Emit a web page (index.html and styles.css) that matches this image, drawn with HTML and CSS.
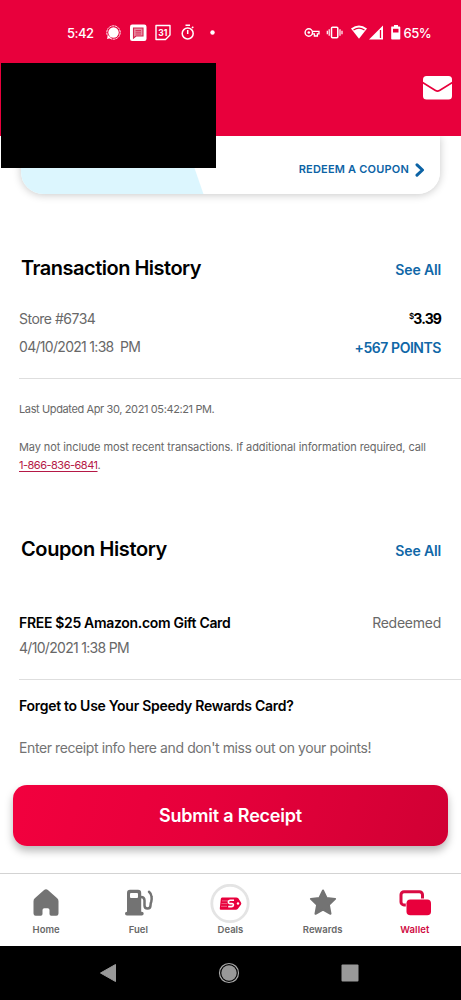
FILE: index.html
```
<!DOCTYPE html>
<html lang="en">
<head>
<meta charset="utf-8">
<title>Wallet</title>
<link rel="stylesheet" href="styles.css">
</head>
<body>
<div class="screen">
  <header class="header">
    <div class="status">
      <span class="clock">5:42</span>
      <svg class="notifications" width="110" height="20" viewBox="0 0 110 20" fill="#fff">
        <circle cx="8.500" cy="9.500" r="5.200"/>
        <circle cx="8.500" cy="9.500" r="6.700" fill="none" stroke="#fff" stroke-width="1" stroke-dasharray="2.4 .6"/>
        <path d="M2 16l1-4 3 3z"/>
        <rect x="25" y="1.500" width="16.500" height="16.500" rx="2.200"/>
        <path d="M28.500 5h9.500v8h-7l-2.500 2z" fill="#e98ba2" stroke="#d3224d" stroke-width="1.100"/>
        <path d="M30.500 7.500h5.500M30.500 9.200h5.500M30.500 11h5.500" stroke="#d3224d" stroke-width=".8"/>
        <path d="M56 2.500h14v9.500l-4.500 4.500H56z" transform="translate(-5 0)" fill="none" stroke="#fff" stroke-width="1.400" stroke-linejoin="round"/>
        <text class="calendar-day" x="57.800" y="12.800" text-anchor="middle">31</text>
        <circle cx="82.700" cy="10.500" r="5.500" fill="none" stroke="#fff" stroke-width="1.500"/>
        <path d="M80.500 2.300h4.500M82.700 7v4M87 5l1.300-1.300" stroke="#fff" stroke-width="1.500"/>
        <circle cx="107.500" cy="9.500" r="2.200"/>
      </svg>
      <svg class="signals" width="97" height="20" viewBox="0 0 97 20" fill="#fff">
        <circle cx="4.800" cy="9.500" r="3.700" fill="none" stroke="#fff" stroke-width="1.400"/>
        <circle cx="4.800" cy="9.500" r="1.300"/>
        <path d="M8.300 8.300H15v2.500h-1.600V13h-3v-2.200H8" fill="none" stroke="#fff" stroke-width="1.300"/>
        <rect x="27.500" y="4.200" width="6.300" height="10.600" rx="1" fill="none" stroke="#fff" stroke-width="1.500"/>
        <path d="M25.200 6.200v6.600M23.300 7.700v3.600M36 6.200v6.600M38 7.700v3.600" stroke="#fff" stroke-width="1.200"/>
        <path d="M47 5.500q8-6 16 0L55 15.800z"/>
        <path d="M49.500 7q5.500-3.700 11 0" fill="none" stroke="#e8003c" stroke-width="1.100"/>
        <path d="M79 2.500v14H65z"/>
        <path d="M76.500 7v8" stroke="#e8003c" stroke-width="1.300"/>
        <path d="M87.500 3.500H90V2h4v1.500h1.500q.8 0 .8.800v11.500q0 .8-.8.800H88q-.8 0-.8-.8V4.300q0-.8.300-.8z"/>
        <path d="M89 5.800h5.500v3.700H89z" fill="#e8003c"/>
      </svg>
      <span class="battery">65%</span>
    </div>
    <svg class="mail" width="29" height="24" viewBox="0 0 29 24">
      <rect width="29" height="23.500" rx="3.500" fill="#fff"/>
      <path d="M-.5 6.500L12.500 14.500q2 1.200 4 0L29.500 6.500" fill="none" stroke="#e8003c" stroke-width="1.700"/>
    </svg>
    <div class="cover"></div>
  </header>

  <main class="content">
    <div class="card-clip">
      <a class="coupon-card">
        <span class="coupon-label">REDEEM A COUPON</span>
        <svg width="10" height="14" viewBox="0 0 10 14"><path d="M2 1.800L7.500 7 2 12.200" fill="none" stroke="#0c63a5" stroke-width="3" stroke-linecap="round" stroke-linejoin="round"/></svg>
      </a>
    </div>

    <section class="transactions">
      <div class="section-head"><h2 class="title title-transactions">Transaction History</h2><a class="see-all">See All</a></div>
      <div class="entry">
        <div class="entry-left"><span class="store">Store #6734</span><span class="date date-store">04/10/2021 1:38 &nbsp;PM</span></div>
        <div class="entry-right"><span class="amount"><span class="currency">$</span>3.39</span><span class="points">+567 POINTS</span></div>
      </div>
      <p class="note updated">Last Updated Apr 30, 2021 05:42:21 PM.</p>
      <p class="note disclaimer">May not include most recent transactions. If additional information required, call<br><a class="phone">1-866-836-6841</a>.</p>
    </section>

    <section class="coupons">
      <div class="section-head"><h2 class="title title-coupons">Coupon History</h2><a class="see-all">See All</a></div>
      <div class="coupon-entry">
        <div class="coupon-row"><strong class="coupon-name">FREE $25 Amazon.com Gift Card</strong><span class="redeemed">Redeemed</span></div>
        <span class="date date-coupon">4/10/2021 1:38 PM</span>
      </div>
    </section>

    <section class="receipt">
      <h3 class="forgot">Forget to Use Your Speedy Rewards Card?</h3>
      <p class="hint">Enter receipt info here and don't miss out on your points!</p>
      <button class="submit"><span>Submit a Receipt</span></button>
    </section>
  </main>

  <nav class="tabs">
    <a class="tab">
      <svg width="40" height="40" viewBox="0 0 40 40"><path d="M20 5.300q1 0 1.900.8l9.300 8.200q1.300 1.200 1.300 3V29.500q0 2.200-2.200 2.200h-5.100q-1.700 0-1.700-1.700V26q0-1.800-1.800-1.800h-3.400q-1.800 0-1.800 1.800v4q0 1.700-1.700 1.700H9.700q-2.200 0-2.200-2.200V17.300q0-1.800 1.300-3l9.300-8.200q.9-.8 1.900-.8z" fill="#737373"/></svg>
      <span>Home</span>
    </a>
    <a class="tab">
      <svg width="40" height="40" viewBox="0 0 40 40"><path d="M12 5.800h8q3.200 0 3.200 3.200v18.700h.6q1.900 0 1.900 1.900t-1.900 1.900H8.900Q7 31.500 7 29.600t1.900-1.900H9V9q0-3.200 3-3.200z" fill="#737373"/><rect x="12" y="9" width="8" height="5" rx="1" fill="#fff"/><path d="M23 13q3.500 0 3.500 3.500v5q0 3 3 3t3-3q0-2 .8-4 .7-2 .2-5-.3-3-2.500-4.800" fill="none" stroke="#737373" stroke-width="2.500" stroke-linecap="round"/></svg>
      <span>Fuel</span>
    </a>
    <a class="tab">
      <svg width="40" height="40" viewBox="0 0 40 40"><circle cx="20" cy="19.500" r="18.200" fill="#fff" stroke="#e4e4e4" stroke-width="2.800"/><path d="M12 13.500h14.300q1.200 0 2 .8l2.600 4q.9 1.200 0 2.400l-3 4q-.8 1-2 1H11q-1.500 0-1.200-1.500l1-9.200q.2-1.500 1.200-1.500z" fill="#e8003c"/><path d="M12 16.900h6M11.500 19.600h6M11 22.300h6" stroke="#f4a4b9" stroke-width=".6"/><path d="M24 16.300h-3.600q-2 0-2 1.700t2 1.600h1.500q1.700 0 1.500 1.500t-2 1.500h-3.200" fill="none" stroke="#fff" stroke-width="1.600"/><circle cx="28" cy="19.500" r="1.200" fill="#fff"/></svg>
      <span>Deals</span>
    </a>
    <a class="tab">
      <svg width="40" height="40" viewBox="0 0 40 40"><path d="M20 6.500l3.600 7.400 8.500 1-6.200 6 1.600 8.900-7.500-4.200-7.500 4.200 1.600-8.900-6.200-6 8.500-1z" fill="#737373" stroke="#737373" stroke-width="2" stroke-linejoin="round"/></svg>
      <span>Rewards</span>
    </a>
    <a class="tab active">
      <svg width="40" height="40" viewBox="0 0 40 40"><rect x="6" y="7.700" width="21.500" height="13.200" rx="3" fill="none" stroke="#d90a42" stroke-width="3"/><rect x="10.800" y="14.500" width="25.200" height="17.500" rx="4.500" fill="#fff"/><rect x="11.500" y="15.500" width="24.500" height="15.800" rx="3.800" fill="#e8003c"/></svg>
      <span>Wallet</span>
    </a>
  </nav>

  <div class="system-nav">
    <svg width="18" height="20" viewBox="0 0 18 20"><path d="M16.500 1.500v17L1.500 10z" fill="#999" stroke="#999" stroke-linejoin="round"/></svg>
    <svg width="22" height="22" viewBox="0 0 22 22"><circle cx="11" cy="11" r="9.500" fill="none" stroke="#aaa" stroke-width="1.200"/><circle cx="11" cy="11" r="7.700" fill="#999"/></svg>
    <svg width="18" height="18" viewBox="0 0 18 18"><rect x=".5" y=".5" width="17" height="17" rx="1" fill="#999"/></svg>
  </div>
</div>
</body>
</html>
```
FILE: styles.css
```
* { box-sizing: border-box; }
body { margin: 0; background: #fff; font-family: Inter, "Liberation Sans", sans-serif; color: #000; }
h2, h3, p { margin: 0; font-weight: inherit; }
svg { display: block; flex: none; }
.screen { width: 461px; height: 1000px; display: flex; flex-direction: column; overflow: hidden; white-space: nowrap; }

.header { position: relative; z-index: 1; height: 136px; flex: none; background: #e8003c; color: #fff; }
.status { display: flex; align-items: center; height: 64px; padding: 2px 0 0 67px; font-size: 13px; }
.clock { width: 38px; font-weight: 500; letter-spacing: -.5px; }
.signals { margin-left: 88.500px; }
.battery { margin-left: 3px; font-weight: 500; letter-spacing: -.5px; }
.calendar-day { font-size: 8.500px; font-weight: 700; letter-spacing: 0; }
.mail { margin: 12px 0 0 423px; }
.cover { position: absolute; left: 1px; top: 63px; width: 215px; height: 105px; background: #000; }

.content { flex: 1; min-height: 0; }
.card-clip { height: 84px; padding: 0 21px; overflow: hidden; }
.coupon-card { display: flex; align-items: center; justify-content: flex-end; gap: 6px; height: 58px; padding: 9px 15px 0 0; border-radius: 0 0 22px 22px; background: linear-gradient(71deg, #dcf6fe 172px, #fff 173px); box-shadow: 0 1px 9px rgba(0,0,0,.22); color: #0c63a5; }
.coupon-label { margin-top: -1px; font-size: 11px; font-weight: 600; letter-spacing: .2px; }

.section-head { display: flex; align-items: center; justify-content: space-between; height: 48px; padding: 0 20px 0 22px; }
.title { font-size: 20px; font-weight: 600; }
.title-transactions { margin-left: -1px; letter-spacing: -.5px; }
.title-coupons { margin-left: -1px; letter-spacing: -.38px; }
.see-all { padding-top: 3px; font-size: 14px; font-weight: 600; letter-spacing: -.15px; color: #1067a7; }
.transactions { padding-top: 24px; }
.entry { display: flex; justify-content: space-between; height: 87px; margin-left: 19px; padding: 13px 20px 0 0; border-bottom: 1px solid #dedede; font-size: 14px; line-height: 28px; color: #686868; }
.entry-left, .entry-right { display: flex; flex-direction: column; }
.entry-right { align-items: flex-end; }
.store { letter-spacing: -.5px; }
.date-store { line-height: 27px; letter-spacing: -.7px; }
.amount { display: flex; font-weight: 700; letter-spacing: -.9px; color: #000; }
.currency { font-size: 8px; line-height: 22px; font-weight: 600; }
.points { font-weight: 600; line-height: 30px; letter-spacing: -.45px; color: #1067a7; }
.note { margin-left: 19px; font-size: 11px; line-height: 18px; color: #686868; }
.updated { padding-top: 21px; letter-spacing: -.38px; }
.disclaimer { padding-top: 20px; letter-spacing: -.09px; }
.phone { letter-spacing: -.5px; color: #b51846; text-decoration: underline; text-underline-offset: 2px; }

.coupons { padding-top: 51px; }
.coupon-entry { height: 107px; margin-left: 19px; padding: 37px 20px 0 0; border-bottom: 1px solid #dedede; font-size: 14px; line-height: 25px; color: #686868; }
.coupon-row { display: flex; justify-content: space-between; }
.coupon-name { font-weight: 600; letter-spacing: -.32px; color: #000; }
.redeemed { letter-spacing: -.25px; }
.date-coupon { letter-spacing: -.7px; }

.receipt { padding: 11px 13px 0; }
.forgot { margin-left: 6px; font-size: 14px; line-height: 30px; font-weight: 600; letter-spacing: -.28px; }
.hint { margin-left: 6px; padding-top: 12px; font-size: 14px; line-height: 30px; letter-spacing: -.4px; color: #737373; }
.submit { display: block; width: 435px; height: 61px; margin-top: 22px; padding: 0; border: 0; border-radius: 14px; background: linear-gradient(105deg, #f2003e, #e6003b 45%, #d10034); box-shadow: 0 5px 9px rgba(0,0,0,.28); color: #fff; font: 600 18px Inter, "Liberation Sans", sans-serif; letter-spacing: -.2px; }

.tabs { display: flex; flex: none; height: 73px; border-top: 1px solid #d3d3d3; background: #fff; }
.tab { display: flex; flex-direction: column; align-items: center; width: 92.2px; padding-top: 10px; font-size: 9.500px; line-height: 12px; font-weight: 600; color: #686868; }
.active { color: #cf0a42; }
.tab.active { letter-spacing: .1px; }
.system-nav { display: flex; justify-content: center; align-items: center; gap: 101px; flex: none; height: 54px; padding-right: 3px; background: #000; }
```
